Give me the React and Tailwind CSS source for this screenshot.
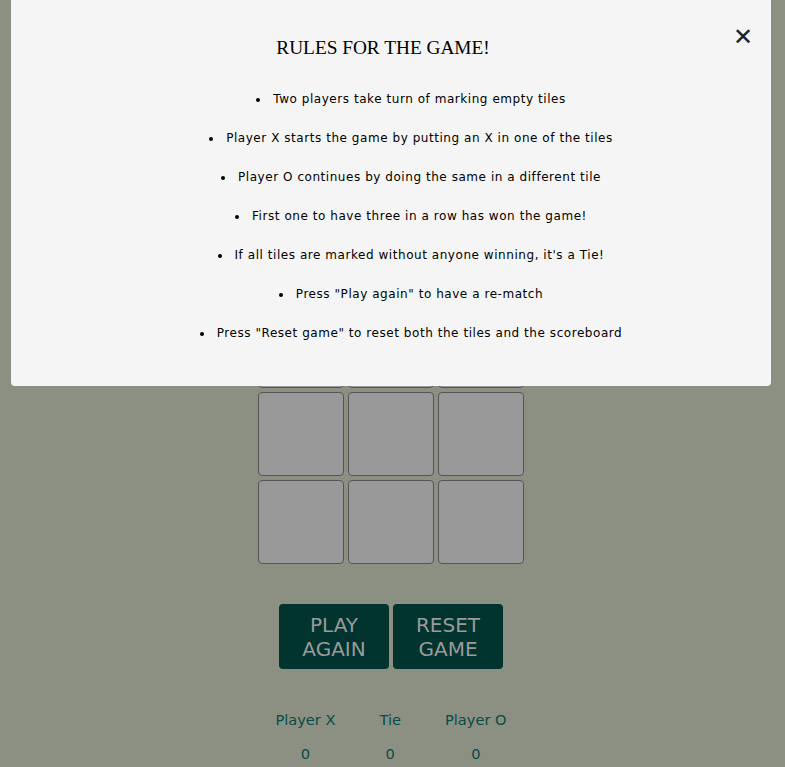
import React from 'react';

const rules = [
  'Two players take turn of marking empty tiles',
  'Player X starts the game by putting an X in one of the tiles',
  'Player O continues by doing the same in a different tile',
  'First one to have three in a row has won the game!',
  "If all tiles are marked without anyone winning, it's a Tie!",
  'Press "Play again" to have a re-match',
  'Press "Reset game" to reset both the tiles and the scoreboard',
];

function App() {
  const tiles = Array.from({ length: 9 });

  return (
    <div className="relative min-h-[767px] bg-[#8c9083] font-['DejaVu_Sans',Verdana,sans-serif]">
      {/* Board */}
      <div className="flex flex-col items-center pr-[3px] pt-[304px]">
        <div className="grid grid-cols-[86px_86px_86px] gap-1">
          {tiles.map((_, i) => (
            <div key={i} className="h-[84px] rounded-[4px] border border-[#555] bg-[#999]" />
          ))}
        </div>

        <div className="mt-10 flex gap-1">
          <button className="h-[65px] w-[110px] rounded-[4px] bg-[#01332f] text-[20px] leading-[24px] text-[#9a9a9a]">
            PLAY<br />AGAIN
          </button>
          <button className="h-[65px] w-[110px] rounded-[4px] bg-[#01332f] text-[20px] leading-[24px] text-[#9a9a9a]">
            RESET<br />GAME
          </button>
        </div>

        <div className="mt-10 flex gap-11 text-[14.6px] text-[#0b4b45]">
          {[
            ['Player X', 0],
            ['Tie', 0],
            ['Player O', 0],
          ].map(([label, score]) => (
            <div key={label} className="flex flex-col items-center gap-[12px]">
              <span>{label}</span>
              <span>{score}</span>
            </div>
          ))}
        </div>
      </div>

      {/* Rules modal */}
      <div className="absolute left-[11px] right-[14px] top-0 rounded-b-[4px] bg-[#f5f5f5] pb-[44px] pt-[36px]">
        <button className="absolute right-[18px] top-[25px] text-[24px] font-bold leading-none text-[#222]">
          ✕
        </button>
        <h2 className="pr-4 text-center font-['Liberation_Serif',serif] text-[19.3px] leading-[24px] text-black">
          RULES FOR THE GAME!
        </h2>
        <ul className="mt-[30px] flex list-inside list-disc flex-col gap-[21px] pl-10 text-center text-[12px] leading-[18px] tracking-[0.55px] text-black">
          {rules.map((r) => (
            <li key={r}>{r}</li>
          ))}
        </ul>
      </div>
    </div>
  );
}

export default App;
